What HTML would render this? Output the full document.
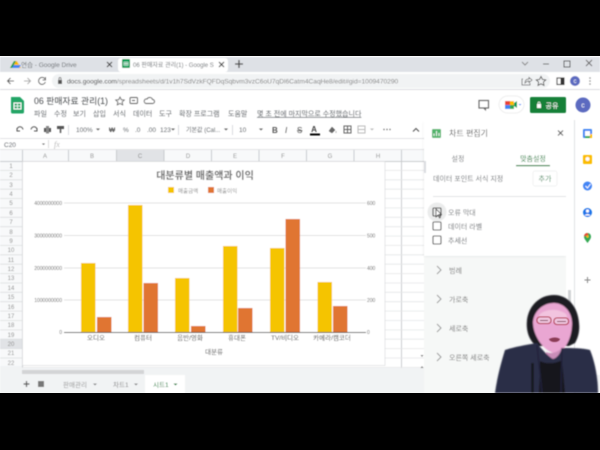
<!DOCTYPE html>
<html><head><meta charset="utf-8"><style>
html,body{margin:0;padding:0;background:#000;width:600px;height:450px;overflow:hidden}
svg{display:block}
text{font-family:"Liberation Sans","Noto Sans CJK KR",sans-serif;fill:#6a6e72}
.s{font-size:7px}.k{font-size:8px}.r{font-size:6px;text-anchor:middle;fill:#888}
.a{font-size:5px;fill:#666}.x{font-size:7.5px;fill:#444;text-anchor:middle}
.c{text-anchor:middle}
</style></head><body>
<svg width="600" height="450" viewBox="0 0 600 450" xmlns="http://www.w3.org/2000/svg">
<defs><filter id="b" x="-5%" y="-5%" width="110%" height="110%"><feGaussianBlur stdDeviation="0.45"/></filter>
<filter id="p" x="-10%" y="-10%" width="120%" height="120%"><feGaussianBlur stdDeviation="0.8"/></filter>
<filter id="f" x="-10%" y="-10%" width="120%" height="120%"><feGaussianBlur stdDeviation="1.2"/></filter></defs>
<rect width="600" height="450" fill="#000"/>
<rect y="56" width="600" height="337" fill="#fff"/>
<g filter="url(#b)">
<!-- chrome tabs -->
<rect y="57" width="600" height="15" fill="#dee1e6"/>
<rect x="118" y="58" width="110" height="14" rx="3" fill="#fff"/>
<path d="M10 68l4-7h3l4 7z" fill="#fbbc04"/><path d="M10 68l2-3h9l-2 3z" fill="#4285f4"/><path d="M14 61l-4 7 2 0 4-7z" fill="#0f9d58"/>
<text x="21" y="67" class="s" style="font-size:6.500px">연습 - Google Drive</text>
<path d="M107 62l5 5m0-5l-5 5" stroke="#444" stroke-width="1.200"/>
<rect x="122" y="59" width="8" height="9" rx="1" fill="#0f9d58"/><path d="M124 62h4v3.500h-4zM126 62v3.500M124 63.700h4" stroke="#fff" stroke-width=".6" fill="none"/>
<text x="133" y="67" class="s" style="font-size:6px">06 판매자료 관리(1) - Google S</text>
<path d="M219 62l5 5m0-5l-5 5" stroke="#444" stroke-width="1.200"/>
<path d="M239 60v8m-4-4h8" stroke="#444" stroke-width="1.300"/>
<path d="M222 0" stroke="none"/>
<path d="M522 62l3 3 3-3" stroke="#888" fill="none"/>
<path d="M543 64h6" stroke="#666"/>
<rect x="564" y="61" width="6" height="6" fill="none" stroke="#555"/>
<path d="M586 60l6 6m0-6l-6 6" stroke="#666"/>
<!-- address bar -->
<rect y="72" width="600" height="18" fill="#fff"/>
<path d="M14 81h-6m2.500-3l-3 3 3 3" stroke="#555" fill="none"/>
<path d="M24 81h6m-2.500-3l3 3-3 3" stroke="#aaa" fill="none"/>
<path d="M45 79a3.500 3.500 0 1 0 .4 3M45.500 77v3h-3" stroke="#555" fill="none"/>
<rect x="52" y="74" width="498" height="14" rx="7" fill="#f1f3f4"/>
<rect x="58" y="80" width="4" height="4" fill="#555"/><path d="M59 80v-1.500a1 1 0 0 1 2 0V80" stroke="#555" fill="none" stroke-width=".7"/>
<text x="67" y="83.500" style="font-size:6.600px;fill:#333">docs.google.com<tspan fill="#808080">/spreadsheets/d/1v1h7SdVzkFQFDqSqbvm3vzC6oU7qDl6Catm4CaqHe8/edit#gid=1009470290</tspan></text>
<path d="M523 79h-1v6h8v-2M525 83c0-3 2-4 4-4v-1.500l3 2.500-3 2.500V81c-2 0-3 1-4 2z" stroke="#666" stroke-width=".8" fill="none"/>
<path d="M541 76.500l1.500 3 3.300.4-2.400 2.200.6 3.300-3-1.600-3 1.600.6-3.300-2.400-2.200 3.300-.4z" fill="none" stroke="#555" stroke-width=".9"/>
<rect x="557" y="78" width="7" height="6.500" fill="none" stroke="#333" stroke-width="1.100"/><rect x="560.500" y="78" width="3.500" height="6.500" fill="#333"/>
<circle cx="575" cy="81" r="5" fill="#5c6bc0"/><text x="575" y="83" class="c" style="font-size:6px;fill:#fff">c</text>
<circle cx="590" cy="78" r=".8" fill="#777"/><circle cx="590" cy="81" r=".8" fill="#777"/><circle cx="590" cy="84" r=".8" fill="#777"/>
<path d="M0 89.500H600" stroke="#dadce0"/>
<!-- sheets header -->
<path d="M11 97h9l4 4v11a1.500 1.500 0 0 1-1.500 1.500h-10a1.500 1.500 0 0 1-1.500-1.500z" fill="#23a566"/>
<rect x="14" y="103" width="7" height="6" fill="none" stroke="#fff"/><path d="M17.500 103v6M14 106h7" stroke="#fff" stroke-width=".8"/>
<text x="34" y="104" style="font-size:8.800px;fill:#4a4d50">06 판매자료 관리(1)</text>
<path d="M120 97l1.300 2.700 3 .3-2.200 2 .6 2.900-2.700-1.500-2.700 1.500.6-2.900-2.200-2 3-.3z" fill="none" stroke="#666" stroke-width=".8"/>
<rect x="130" y="97.500" width="7.500" height="6" rx="1" fill="none" stroke="#666" stroke-width=".9"/><path d="M132 100.500h3" stroke="#666"/>
<path d="M146 103.500h6.500a2 2 0 0 0 0-4 3 3 0 0 0-5.500-.5 2.300 2.300 0 0 0-1 4.500z" fill="none" stroke="#666" stroke-width=".9"/>
<g style="font-size:7px">
<text x="34" y="116">파일</text><text x="54" y="116">수정</text><text x="73" y="116">보기</text><text x="93" y="116">삽입</text><text x="113" y="116">서식</text><text x="133" y="116">데이터</text><text x="159" y="116">도구</text><text x="179" y="116">확장 프로그램</text><text x="228" y="116">도움말</text>
</g>
<text x="257" y="116" style="font-size:7px;text-decoration:underline">몇 초 전에 마지막으로 수정했습니다</text>
<!-- editor toolbar -->
<path d="M17 130a3 3 0 0 1 6-.5M17 128v3h3" stroke="#555" fill="none"/><path d="M37 130a3 3 0 0 0-6-.5M37 128v3h-3" stroke="#555" fill="none"/>
<rect x="44" y="128" width="7" height="4" fill="#555"/><rect x="46" y="126" width="3" height="7.500" fill="#888"/>
<rect x="57" y="126" width="7" height="3" fill="#555"/><path d="M60.500 129v4" stroke="#555" stroke-width="1.500"/>
<path d="M68.500 125v10" stroke="#dadce0"/>
<text x="76" y="132" class="s" style="font-size:6.500px">100%</text><path d="M96 128.500l2 2 2-2z" fill="#666"/>
<text x="109" y="132" class="s" style="font-size:6.500px;fill:#555;font-weight:bold">₩</text><text x="123" y="132" class="s" style="font-size:6.500px">%</text>
<text x="135" y="132" class="s" style="font-size:6.500px">.0</text><text x="147" y="132" class="s" style="font-size:6.500px">.00</text><text x="160" y="132" class="s" style="font-size:6.500px">123</text><path d="M171 128.500l2 2 2-2z" fill="#666"/>
<path d="M178.500 125v10" stroke="#dadce0"/>
<text x="186" y="132" style="font-size:6px">기본값 (Cal...</text><path d="M224 128.500l2 2 2-2z" fill="#666"/>
<path d="M232.500 125v10" stroke="#dadce0"/>
<text x="239" y="132" class="s" style="font-size:6.500px">10</text><path d="M259 128.500l2 2 2-2z" fill="#666"/>
<text x="272" y="133" class="k" style="font-weight:bold;fill:#555">B</text><text x="285" y="133" class="k" style="font-style:italic;fill:#555">I</text><text x="297" y="133" class="k" style="fill:#555;text-decoration:line-through">S</text>
<text x="314" y="132" class="c k" style="font-weight:bold;fill:#444">A</text><rect x="310" y="133.500" width="10" height="2" fill="#000"/>
<path d="M329 131l3-4 3 3-3 3zM336 131v2" fill="#666" stroke="#666" stroke-width=".5"/>
<rect x="344" y="126" width="7" height="7" fill="none" stroke="#666"/><path d="M347.500 126v7M344 129.500h7" stroke="#666"/>
<rect x="358" y="126" width="7" height="7" fill="none" stroke="#bbb"/><path d="M358 129.500h7" stroke="#bbb"/><path d="M370 128.500l2 2 2-2z" fill="#bbb"/>
<circle cx="384" cy="129.500" r=".7" fill="#666"/><circle cx="387" cy="129.500" r=".7" fill="#666"/><circle cx="390" cy="129.500" r=".7" fill="#666"/>
<path d="M413 131.500l3-3 3 3" stroke="#555" stroke-width="1.100" fill="none"/>
<!-- formula bar -->
<path d="M0 138.500H424M0 149.500H424" stroke="#e2e3e5"/>
<text x="4" y="147" class="s" style="font-size:6.500px">C20</text><path d="M42 143.500l1.500 1.500 1.500-1.500z" fill="#666"/><path d="M48.500 140v8" stroke="#ddd"/>
<text x="54" y="147" style="font-size:8px;font-style:italic;fill:#bbb;font-family:'Liberation Serif',serif">fx</text>
<!-- grid -->
<rect y="150" width="424" height="221" fill="#fff"/>
<rect y="150" width="424" height="11" fill="#f8f9fa"/>
<rect x="116.500" y="150" width="47.500" height="11" fill="#e1e3e6"/>
<rect y="161" width="22" height="210" fill="#f8f9fa"/>
<rect y="339.500" width="22" height="9.400" fill="#e1e3e6"/>
<path d="M22.500 150v221M68.500 150v11M116.500 150v11M164 150v11M211.500 150v11M259 150v11M306.500 150v11M354 150v11M401.500 150v221M0 161.500H424" stroke="#c8cacd"/>
<path d="M0 170.400h22M0 179.800h22M0 189.200h22M0 198.500h22M0 207.900h22M0 217.300h22M0 226.700h22M0 236.100h22M0 245.400h22M0 254.800h22M0 264.200h22M0 273.600h22M0 283h22M0 292.300h22M0 301.700h22M0 311.100h22M0 320.500h22M0 329.900h22M0 339.200h22M0 348.600h22M0 358h22M0 367.400h22" stroke="#dcdee0" stroke-width=".8"/>
<path d="M385 170.400h39M385 179.800h39M385 189.200h39M385 198.500h39M385 207.900h39M385 217.300h39M385 226.700h39M385 236.100h39M385 245.400h39M385 254.800h39M385 264.200h39M385 273.600h39M385 283h39M385 292.300h39M385 301.700h39M385 311.100h39M385 320.500h39M385 329.900h39M385 339.200h39M385 348.600h39M385 358h39M22 367.400h402" stroke="#e4e5e7" stroke-width=".8"/>
<text x="45" y="158" class="r">A</text><text x="92" y="158" class="r">B</text><text x="140" y="158" class="r">C</text><text x="188" y="158" class="r">D</text><text x="235" y="158" class="r">E</text><text x="283" y="158" class="r">F</text><text x="330" y="158" class="r">G</text><text x="378" y="158" class="r">H</text>
<text x="11" y="168" class="r">1</text><text x="11" y="177" class="r">2</text><text x="11" y="187" class="r">3</text><text x="11" y="196" class="r">4</text><text x="11" y="205" class="r">5</text><text x="11" y="215" class="r">6</text><text x="11" y="224" class="r">7</text><text x="11" y="234" class="r">8</text><text x="11" y="243" class="r">9</text><text x="11" y="252" class="r">10</text><text x="11" y="262" class="r">11</text><text x="11" y="271" class="r">12</text><text x="11" y="280" class="r">13</text><text x="11" y="290" class="r">14</text><text x="11" y="299" class="r">15</text><text x="11" y="309" class="r">16</text><text x="11" y="318" class="r">17</text><text x="11" y="327" class="r">18</text><text x="11" y="337" class="r">19</text><text x="11" y="346" class="r">20</text><text x="11" y="355" class="r">21</text><text x="11" y="365" class="r">22</text>
<!-- chart -->
<rect x="22.500" y="161.500" width="362.500" height="204" fill="#fff" stroke="#d6d7d9" stroke-width=".6"/>
<text x="205" y="179" class="c" style="font-size:10px;font-weight:bold;fill:#6c6c6c">대분류별 매출액과 이익</text>
<rect x="168" y="187" width="6" height="6" fill="#f5c400"/><text x="178" y="193" style="font-size:5.500px;fill:#888">매출금액</text>
<rect x="208" y="187" width="6" height="6" fill="#e07533"/><text x="217" y="193" style="font-size:5.500px;fill:#888">매출이익</text>
<path d="M64 203h302M64 235.500h302M64 268h302M64 300h302" stroke="#e2e2e2" stroke-width=".9"/>
<g fill="#f5c400"><rect x="81" y="263" width="14.500" height="69"/><rect x="128" y="205" width="14.500" height="127"/><rect x="175" y="278" width="14.500" height="54"/><rect x="223" y="246" width="14.500" height="86"/><rect x="270" y="248" width="14.500" height="84"/><rect x="317.500" y="282" width="14.500" height="50"/></g>
<g fill="#e07533"><rect x="97" y="317" width="14.500" height="15"/><rect x="143.500" y="283" width="14.500" height="49"/><rect x="191" y="326" width="14.500" height="6"/><rect x="238" y="308" width="14.500" height="24"/><rect x="285.500" y="219" width="14.500" height="113"/><rect x="333" y="306" width="14.500" height="26"/></g>
<path d="M64 332.500h302" stroke="#555" stroke-width="1"/>
<text x="62" y="205" class="a" style="text-anchor:end">4000000000</text><text x="62" y="237.500" class="a" style="text-anchor:end">3000000000</text><text x="62" y="270" class="a" style="text-anchor:end">2000000000</text><text x="62" y="302" class="a" style="text-anchor:end">1000000000</text><text x="62" y="334" class="a" style="text-anchor:end">0</text>
<text x="367" y="205" class="a">600</text><text x="367" y="237.500" class="a">500</text><text x="367" y="270" class="a">400</text><text x="367" y="302" class="a">200</text><text x="367" y="334" class="a">0</text>
<text x="96" y="340" class="x" style="font-size:6.500px">오디오</text><text x="143" y="340" class="x" style="font-size:6.500px">컴퓨터</text><text x="190" y="340" class="x" style="font-size:6.500px">음반/영화</text><text x="237" y="340" class="x" style="font-size:6.500px">휴대폰</text><text x="285" y="340" class="x" style="font-size:6.500px">TV/비디오</text><text x="332" y="340" class="x" style="font-size:6.500px">카메라/캠코더</text>
<text x="214" y="354" class="x" style="font-size:6.500px">대분류</text>
<!-- sheet bar -->
<rect x="22" y="368" width="402" height="7" fill="#f1f3f4"/>
<rect x="22" y="370" width="122" height="4" fill="#d3d4d6"/>
<rect y="375" width="600" height="18" fill="#f1f3f4"/>
<rect y="366" width="22" height="9" fill="#f1f3f4"/>
<path d="M26.500 381v6m-3-3h6" stroke="#555" stroke-width="1.200"/>
<rect x="38" y="381" width="6" height="6" fill="#777"/>
<text x="63" y="387" style="font-size:6.500px;fill:#999">판매관리</text><path d="M93 383.500l2 2 2-2z" fill="#888"/>
<text x="113" y="387" style="font-size:6.500px;fill:#888">차트1</text><path d="M134 383.500l2 2 2-2z" fill="#888"/>
<rect x="145" y="375" width="40" height="18" fill="#fff"/>
<text x="153" y="387" style="font-size:6.500px;fill:#188038">시트1</text><path d="M173.500 383.500l2 2 2-2z" fill="#188038"/>
<!-- side panel -->
<rect x="424" y="120" width="150" height="273" fill="#f6f8f7"/>
<path d="M424 122h142v134H424z" fill="#000" opacity=".12" filter="url(#f)"/>
<rect x="424" y="120" width="142" height="136" fill="#fff"/>
<rect x="566" y="120" width="8" height="273" fill="#fff"/>
<rect x="568" y="290" width="3" height="22" fill="#cfd1d3"/>
<path d="M574.500 120V393" stroke="#dfe1e3"/>
<rect x="432" y="129" width="9" height="9" rx="1" fill="#34a853" opacity=".85"/><path d="M434 136v-2.500M436.500 136v-5M439 136v-3" stroke="#fff" stroke-width=".9"/>
<text x="449" y="136" style="font-size:8px;fill:#555">차트 편집기</text>
<path d="M558 130.500l5 5m0-5l-5 5" stroke="#555" stroke-width="1.100"/>
<text x="458" y="161" class="c" style="font-size:7px">설정</text>
<text x="533" y="161" class="c" style="font-size:7px;fill:#188038">맞춤설정</text>
<rect x="516" y="165" width="34" height="1.200" fill="#188038"/>
<rect x="424" y="161" width="2" height="12" fill="#dadce0"/>
<text x="433" y="181" style="font-size:7px">데이터 포인트 서식 지정</text>
<rect x="533" y="171" width="24" height="15" rx="2" fill="#fff" stroke="#eceded" stroke-width=".7"/>
<text x="545" y="181" class="c" style="font-size:7px;fill:#3d8a5a">추가</text>
<path d="M433 196.500H566" stroke="#e2e3e5"/>
<circle cx="437" cy="212" r="9.500" fill="#ebecec"/>
<rect x="433" y="208" width="8" height="8" rx="1" fill="none" stroke="#444" stroke-width="1.100"/>
<rect x="433" y="222" width="8" height="8" rx="1" fill="none" stroke="#555" stroke-width="1.100"/>
<rect x="433" y="236" width="8" height="8" rx="1" fill="none" stroke="#555" stroke-width="1.100"/>
<path d="M436 209v8l2-2 1.500 3 1-.5-1.500-3h2.500z" fill="#fff" stroke="#111" stroke-width=".7"/>
<text x="448" y="215" style="font-size:7px">오류 막대</text><text x="448" y="229" style="font-size:7px">데이터 라벨</text><text x="448" y="243" style="font-size:7px">추세선</text>
<path d="M437 266l4 4-4 4M437 295l4 4-4 4M437 324l4 4-4 4M437 353l4 4-4 4" stroke="#999" fill="none"/>
<text x="449" y="273" style="font-size:7px;fill:#777">범례</text><text x="449" y="302" style="font-size:7px;fill:#777">가로축</text><text x="449" y="331" style="font-size:7px;fill:#777">세로축</text><text x="449" y="360" style="font-size:7px;fill:#777">오른쪽 세로축</text>
<path d="M422 357l-1.500-2h3zM422 366l-1.500 2h3z" fill="#777"/>
<!-- header right -->
<rect x="479" y="100.500" width="9.500" height="7.500" fill="none" stroke="#666" stroke-width="1.100"/><path d="M486 108v3l-3-3z" fill="#666"/>
<rect x="499" y="96" width="25" height="17" rx="8.500" fill="#fff" stroke="#eee"/>
<rect x="505" y="101" width="5" height="4" fill="#ea4335"/><rect x="510" y="101" width="4" height="4" fill="#fbbc04"/><rect x="505" y="105" width="5" height="4" fill="#4285f4"/><rect x="510" y="105" width="4" height="4" fill="#34a853"/><path d="M514 103l3-2v7l-3-2z" fill="#0f9d58"/><path d="M518.500 104l1.500 1.500 1.500-1.500z" fill="#4285f4"/>
<rect x="530" y="97" width="36" height="16" rx="1.500" fill="#188038"/>
<rect x="537" y="104" width="4" height="4" fill="#fff"/><path d="M538 104v-1a1 1 0 0 1 2 0v1" stroke="#fff" fill="none" stroke-width=".7"/>
<text x="552" y="108" class="c" style="font-size:7px;fill:#fff">공유</text>
<circle cx="583" cy="105" r="7.500" fill="#5c6bc0"/><text x="583" y="107.500" class="c" style="font-size:7px;fill:#fff">c</text>
<!-- right icons -->
<rect x="583" y="129" width="9" height="9" rx="1" fill="#4285f4"/><rect x="585" y="131" width="5" height="5" fill="#fff"/><rect x="590" y="134" width="2" height="4" fill="#fbbc04"/><rect x="585" y="136" width="5" height="2" fill="#34a853"/>
<rect x="583" y="155" width="9" height="9" rx="1" fill="#fbbc04"/><circle cx="587.500" cy="159" r="2" fill="#fff"/>
<circle cx="587.500" cy="186" r="4.500" fill="#4285f4"/><path d="M585.500 186l2 2 3-4" stroke="#fff" fill="none"/>
<circle cx="587.500" cy="212.500" r="4.500" fill="#1a73e8"/><circle cx="587.500" cy="211" r="1.600" fill="#fff"/><path d="M584.800 215.500a2.800 2 0 0 1 5.400 0z" fill="#fff"/>
<path d="M587.500 243c-3-4-3.500-5-3.500-6.500a3.500 3.500 0 0 1 7 0c0 1.500-.5 2.500-3.500 6.500z" fill="#34a853"/><path d="M584 236.500a3.500 3.500 0 0 1 3.500-3.500l1 2z" fill="#ea4335"/><circle cx="587.500" cy="236.500" r="1.200" fill="#fbbc04"/>
<path d="M587.500 277v6m-3-3h6" stroke="#888"/>
</g>
<!-- person -->
<g filter="url(#p)">
<path d="M533 343c-5-6-7-14-6-23 2-15 13-25 27-25 14 0 24 12 25 28 1 8-1 15-4 20l-6 3-30 0z" fill="#1d1d24"/>
<path d="M533 322c1-11 10-19 21-19 10 0 18 9 18 20 0 12-4 22-10 27-4 3-8 4-11 2-9-4-18-17-18-30z" fill="#e9a6d2"/>
<path d="M540 314c6-5 18-6 26 0 2 3 1 6-1 8h-24c-2-2-3-5-1-8z" fill="#f2c4df"/>
<path d="M546 352c5 2 10 1 15-3v12l-15 2z" fill="#c98db8"/>
<path d="M505 350c9-3 20-5 32-7 6 8 12 14 16 16 4-1 7-5 9-11 10 0 21 0 28 2 5 12 8 28 8 43H495c2-15 6-30 10-43z" fill="#2a2e47"/>
<path d="M540 361c5 3 16 3 22-1l3 33h-26z" fill="#14141a"/>
<path d="M537 345l5 48M562 348l-1 45" stroke="#20233a" stroke-width="1.500"/>
<path d="M532.500 363v30" stroke="#12131a" stroke-width="2.500"/>
</g>
<g filter="url(#b)">
<rect x="537" y="317" width="14" height="6.500" rx="3" fill="#f0c6e0" stroke="#b23a52" stroke-width="1.100"/><rect x="554" y="318" width="14.500" height="6.500" rx="3" fill="#f0c6e0" stroke="#b23a52" stroke-width="1.100"/>
<path d="M540 320.500h8M557 321.500h9" stroke="#7a3a50" stroke-width=".9"/>
<path d="M549 339c4-2 8-2 11 0-1 4-10 4-11 0z" fill="#8a3a55"/>
</g>
<rect y="393" width="600" height="57" fill="#000"/>
</svg>
</body></html>
